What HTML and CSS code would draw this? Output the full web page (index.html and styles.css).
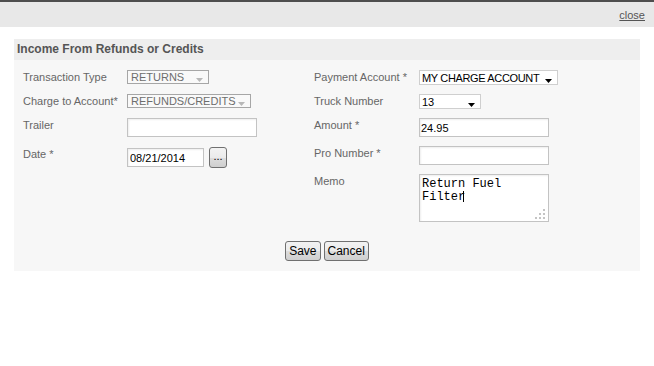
FILE: index.html
```html
<!DOCTYPE html>
<html>
<head>
<meta charset="utf-8">
<link rel="stylesheet" href="styles.css">
</head>
<body>
<div class="topline"></div>
<div class="topbar"><a class="close" href="#">close</a></div>
<div class="panel">
  <div class="panel-head">Income From Refunds or Credits</div>
  <div class="panel-body">
    <div class="col col-left">
      <div class="label">Transaction Type</div>
      <div class="field"><div class="sel sel-dis w82"><span>RETURNS</span><svg class="arr" width="7" height="4" viewBox="0 0 7 4"><path d="M0 0H7L3.5 4Z" fill="#b8b8b8"/></svg></div></div>
      <div class="label">Charge to Account*</div>
      <div class="field"><div class="sel sel-dis w124"><span>REFUNDS/CREDITS</span><svg class="arr" width="7" height="4" viewBox="0 0 7 4"><path d="M0 0H7L3.5 4Z" fill="#b8b8b8"/></svg></div></div>
      <div class="label">Trailer</div>
      <div class="field"><input class="txt w130" type="text" value=""></div>
      <div class="label">Date *</div>
      <div class="field date-row"><input class="txt w77" type="text" value="08/21/2014"><button class="dots-btn">...</button></div>
    </div>
    <div class="col col-right">
      <div class="label">Payment Account *</div>
      <div class="field"><div class="sel sel-on w139"><span class="tight">MY CHARGE ACCOUNT</span><svg class="arr" width="7" height="4" viewBox="0 0 7 4"><path d="M0 0H7L3.5 4Z" fill="#000"/></svg></div></div>
      <div class="label">Truck Number</div>
      <div class="field"><div class="sel sel-on w62"><span>13</span><svg class="arr" width="7" height="4" viewBox="0 0 7 4"><path d="M0 0H7L3.5 4Z" fill="#000"/></svg></div></div>
      <div class="label">Amount *</div>
      <div class="field"><input class="txt w130" type="text" value="24.95"></div>
      <div class="label">Pro Number *</div>
      <div class="field"><input class="txt w130" type="text" value=""></div>
      <div class="label">Memo</div>
      <div class="field memo-wrap">
        <textarea class="memo">Return Fuel
Filter</textarea>
        <span class="caret"></span>
        <svg class="grip" width="11" height="11" viewBox="0 0 11 11"><g fill="#c4c4c4"><rect x="8" y="0" width="2" height="2"/><rect x="4" y="4" width="2" height="2"/><rect x="8" y="4" width="2" height="2"/><rect x="0" y="8" width="2" height="2"/><rect x="4" y="8" width="2" height="2"/><rect x="8" y="8" width="2" height="2"/></g></svg>
      </div>
    </div>
    <div class="actions">
      <button class="btn">Save</button>
      <button class="btn">Cancel</button>
    </div>
  </div>
</div>
</body>
</html>
```
FILE: styles.css
```css
html, body {
  margin: 0;
  padding: 0;
  background: #ffffff;
  font-family: "Liberation Sans", Arial, sans-serif;
  font-size: 11px;
}
.topline {
  height: 2px;
  background: #4e4e4e;
}
.topbar {
  height: 25px;
  background: #e8e8e8;
  display: flex;
  align-items: center;
  justify-content: flex-end;
  padding-right: 9px;
}
.close {
  color: #555555;
  text-decoration: underline;
  font-size: 11px;
  line-height: 13px;
  margin-top: 1px;
}
.panel {
  margin: 12px 14px 0 14px;
  background: #f7f7f7;
}
.panel-head {
  height: 21px;
  line-height: 21px;
  background: #eeeeee;
  color: #555555;
  font-weight: bold;
  font-size: 12px;
  padding-left: 3px;
}
.panel-body {
  display: grid;
  grid-template-columns: 291px 1fr;
  padding: 10px 9px 10px 9px;
}
.col {
  display: grid;
  align-items: start;
}
.col-left {
  grid-template-columns: 104px auto;
  grid-template-rows: 24px 24px 29px 21px;
}
.col-right {
  grid-template-columns: 105px auto;
  grid-template-rows: 24px 24px 28px 28px 48px;
}
.label {
  color: #666666;
  line-height: 14px;
  font-size: 11px;
}
.field {
  display: flex;
  align-items: flex-start;
}
.sel {
  box-sizing: border-box;
  height: 14px;
  display: flex;
  align-items: center;
  justify-content: space-between;
  padding: 0 5px 0 2px;
  font-size: 11px;
  line-height: 12px;
}
.sel span {
  white-space: nowrap;
}
.sel .tight {
  letter-spacing: -0.35px;
}
.sel-dis {
  border: 1px solid #a6a6a6;
  background: #f9f9f9;
  color: #6d6d6d;
  padding-left: 3px;
}
.sel-on {
  height: 15px;
  border: 1px solid #cfcfcf;
  background: #ffffff;
  color: #000000;
}
.arr {
  flex: none;
  margin-top: 6px;
}
.w82 { width: 82px; }
.w124 { width: 124px; }
.w139 { width: 139px; }
.w62 { width: 62px; }
.w130 { width: 130px; }
.w77 { width: 77px; }
.txt {
  box-sizing: border-box;
  height: 19px;
  border: 1px solid #c3c3c3;
  background: #ffffff;
  box-shadow: inset 1px 1px 2px rgba(0, 0, 0, 0.07);
  padding: 0 1px;
  margin: 0;
  font-family: "Liberation Sans", Arial, sans-serif;
  font-size: 11px;
  color: #000000;
  outline: none;
}
.date-row {
  gap: 5px;
  margin-top: 1px;
}
.date-row .txt {
  padding-left: 2px;
}
.dots-btn {
  box-sizing: border-box;
  width: 18px;
  height: 21px;
  margin-top: -1px;
  padding: 0 0 3px 0;
  border: 1px solid #707070;
  border-radius: 3px;
  background: linear-gradient(#f3f3f3, #ebebeb 50%, #dddddd 51%, #cfcfcf);
  font-family: "Liberation Sans", Arial, sans-serif;
  font-size: 11px;
  color: #000;
  line-height: 10px;
}
.memo-wrap {
  position: relative;
  width: 130px;
  height: 48px;
}
.memo {
  box-sizing: border-box;
  width: 130px;
  height: 48px;
  margin: 0;
  border: 1px solid #c3c3c3;
  box-shadow: inset 1px 1px 2px rgba(0, 0, 0, 0.07);
  padding: 3px 2px 2px 2px;
  font-family: "Liberation Mono", "Courier New", monospace;
  font-size: 12px;
  line-height: 13px;
  color: #000;
  resize: none;
  overflow: hidden;
  outline: none;
}
.caret {
  position: absolute;
  left: 44px;
  top: 17px;
  width: 1px;
  height: 11px;
  background: #000;
}
.grip {
  position: absolute;
  right: 3px;
  bottom: 2px;
}
.actions {
  grid-column: 1 / 3;
  display: flex;
  justify-content: center;
  gap: 3px;
  margin-top: 19px;
}
.btn {
  box-sizing: border-box;
  height: 20px;
  padding: 0 3px;
  border: 1px solid #707070;
  border-radius: 3px;
  background: linear-gradient(#f2f2f2, #ebebeb 50%, #dddddd 51%, #cfcfcf);
  font-family: "Liberation Sans", Arial, sans-serif;
  font-size: 12px;
  color: #000;
  line-height: 16px;
}
```
